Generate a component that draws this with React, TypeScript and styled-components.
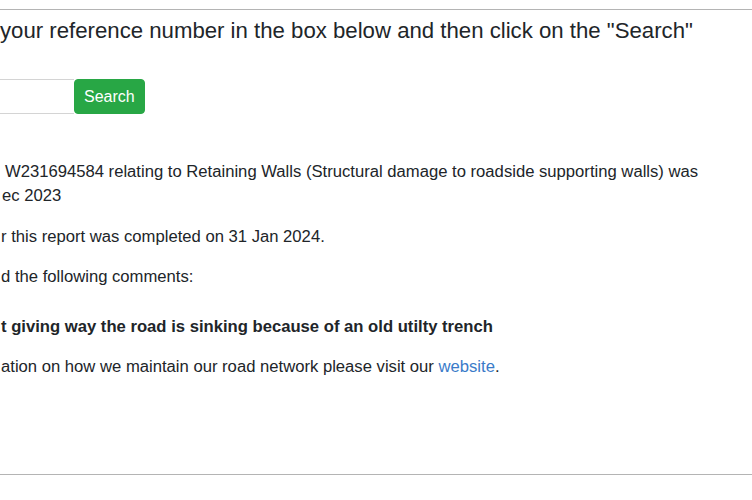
import React from "react";
import styled, { createGlobalStyle } from "styled-components";

const GlobalStyle = createGlobalStyle`
  html, body {
    margin: 0;
    padding: 0;
    background: #ffffff;
    overflow: hidden;
  }
  body {
    font-family: "Liberation Sans", Arial, sans-serif;
    color: #212529;
  }
`;

const Page = styled.div`
  width: 752px;
  height: 500px;
  padding-top: 9px;
  box-sizing: border-box;
  overflow: hidden;
`;

const Rule = styled.hr<{ $gap: number }>`
  margin: 0;
  margin-top: ${(p) => p.$gap}px;
  border: 0;
  border-top: 1px solid #b4b4b4;
  height: 0;
`;

const Heading = styled.h4`
  margin: 8px 0 0 0;
  font-size: 22.2px;
  font-weight: 400;
  line-height: 26px;
  white-space: nowrap;
`;

const SearchRow = styled.form`
  display: flex;
  margin-top: 35px;
  height: 35px;
`;

const RefInput = styled.input`
  width: 74px;
  height: 35px;
  box-sizing: border-box;
  border: 1px solid #d4d4d4;
  border-left: none;
  border-right: none;
  padding: 0;
  outline: none;
  font: inherit;
`;

const SearchButton = styled.button`
  height: 35px;
  box-sizing: border-box;
  padding: 0 9px;
  border: 1px solid #28a745;
  border-radius: 4px;
  background: #28a745;
  color: #ffffff;
  font-family: "Liberation Sans", Arial, sans-serif;
  font-size: 16px;
  line-height: 1;
  cursor: pointer;
`;

const Result = styled.div`
  margin-top: 46px;
`;

const Para = styled.p<{ $indent?: number; $after?: number }>`
  margin: 0 0 ${(p) => p.$after ?? 16}px 0;
  padding-left: ${(p) => p.$indent ?? 1}px;
  font-size: 16.65px;
  line-height: 24px;
  white-space: nowrap;
`;

const Comment = styled.p`
  margin: 26px 0 16px 0;
  padding-left: 1px;
  font-size: 16.65px;
  font-weight: 700;
  line-height: 24px;
  white-space: nowrap;
`;

const Link = styled.a`
  color: #3a7bc9;
  text-decoration: none;
`;

export default function App() {
  return (
    <>
      <GlobalStyle />
      <Page>
        <Rule $gap={0} />
        <Heading>your reference number in the box below and then click on the "Search"</Heading>
        <SearchRow onSubmit={(e) => e.preventDefault()}>
          <RefInput type="text" aria-label="Reference number" />
          <SearchButton type="submit">Search</SearchButton>
        </SearchRow>
        <Result>
          <Para $indent={5} $after={17}>
            W231694584 relating to Retaining Walls (Structural damage to roadside supporting walls) was
            <br />
            <span style={{ marginLeft: -3 }}>ec 2023</span>
          </Para>
          <Para>r this report was completed on 31 Jan 2024.</Para>
          <Para>d the following comments:</Para>
          <Comment>t giving way the road is sinking because of an old utilty trench</Comment>
          <Para>
            ation on how we maintain our road network please visit our <Link href="#">website</Link>.
          </Para>
        </Result>
        <Rule $gap={95} />
      </Page>
    </>
  );
}
